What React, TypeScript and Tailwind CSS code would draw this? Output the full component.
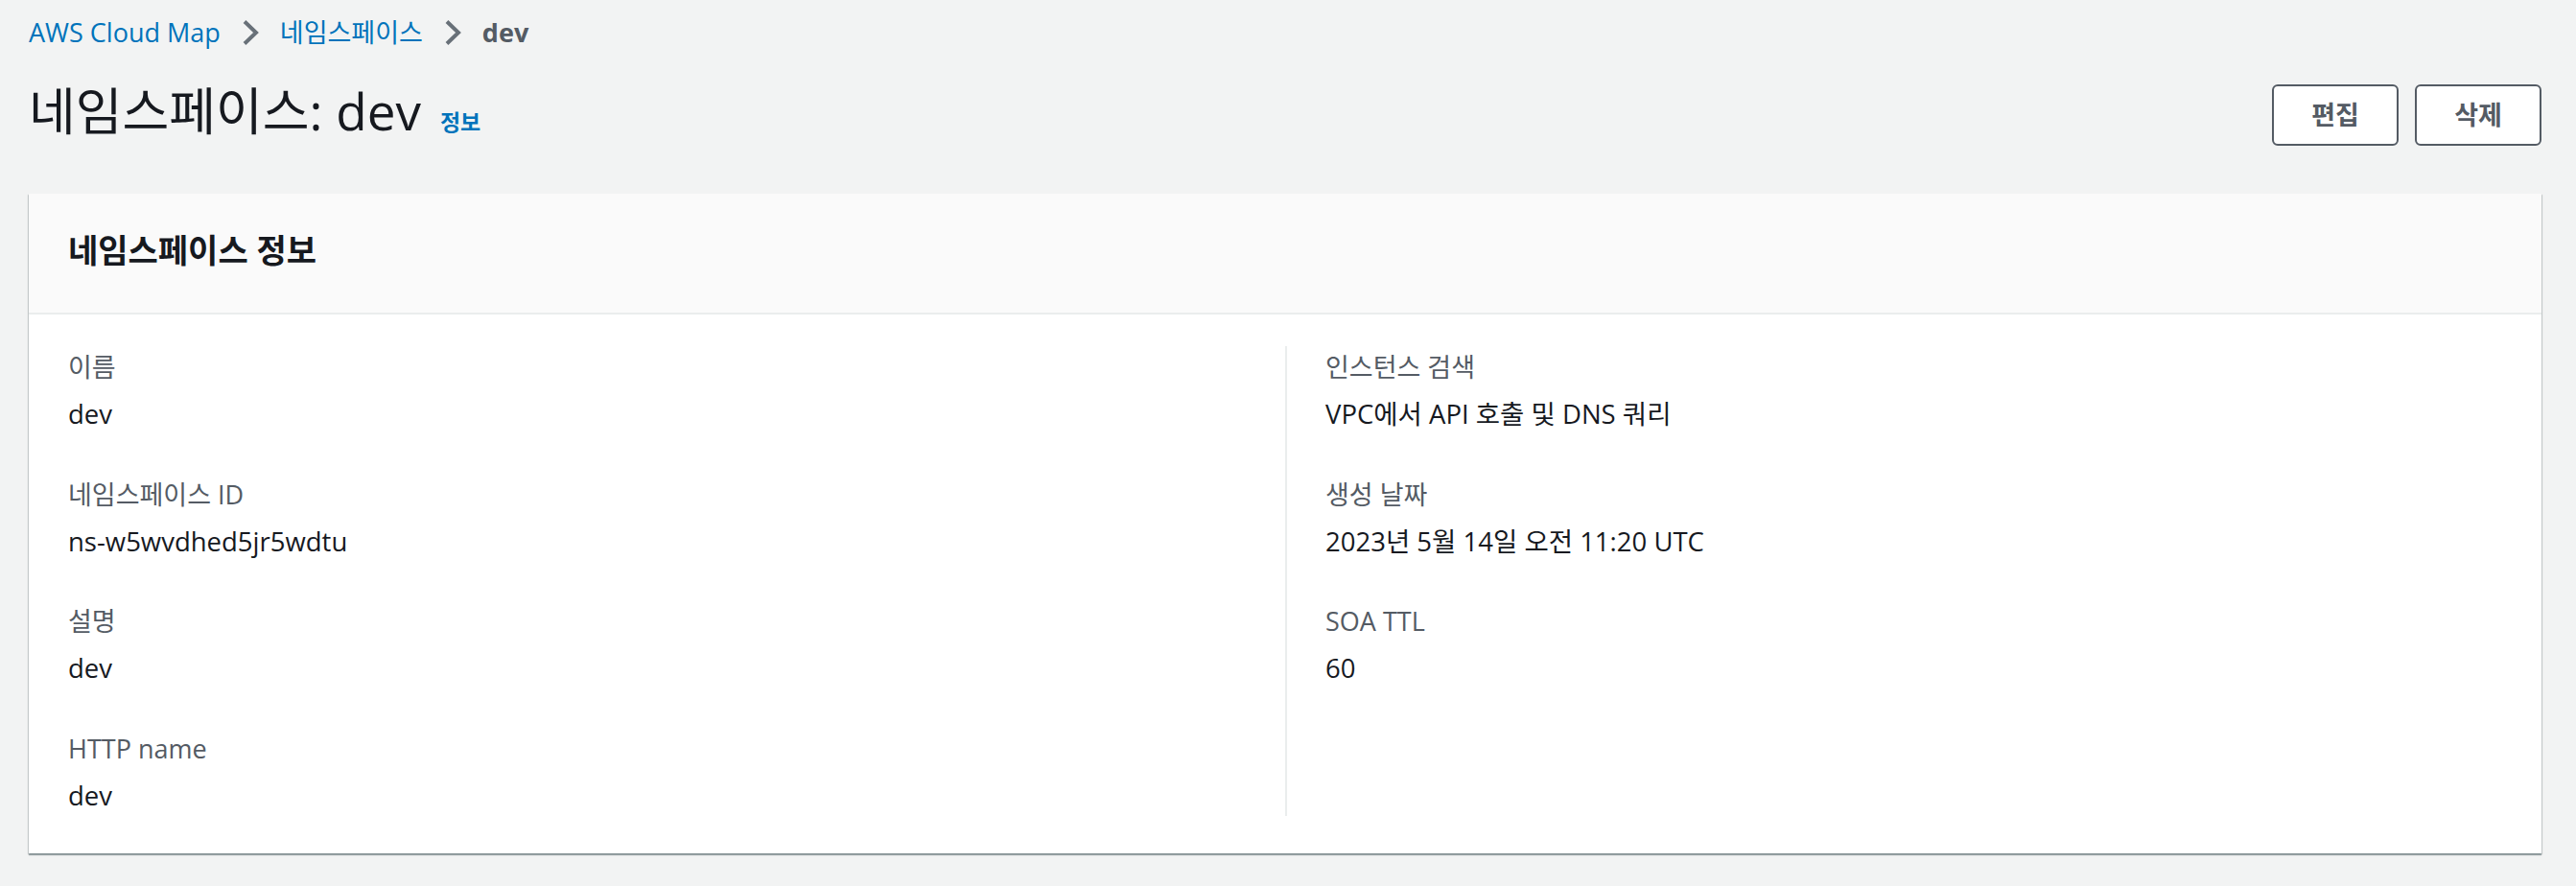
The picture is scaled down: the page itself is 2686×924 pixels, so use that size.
function Chevron() {
  return (
    <svg width="18" height="28" viewBox="0 0 18 28" className="mx-[22px] shrink-0">
      <polyline points="3,2.5 15,14 3,25.5" fill="none" stroke="#687078" strokeWidth="4" />
    </svg>
  );
}

interface Field {
  label: string;
  value: string;
}

const left: Field[] = [
  { label: "이름", value: "dev" },
  { label: "네임스페이스 ID", value: "ns-w5wvdhed5jr5wdtu" },
  { label: "설명", value: "dev" },
  { label: "HTTP name", value: "dev" },
];

const right: Field[] = [
  { label: "인스턴스 검색", value: "VPC에서 API 호출 및 DNS 쿼리" },
  { label: "생성 날짜", value: "2023년 5월 14일 오전 11:20 UTC" },
  { label: "SOA TTL", value: "60" },
];

function FieldList({ items }: { items: Field[] }) {
  return (
    <div className="flex flex-col gap-[40.5px]">
      {items.map((f) => (
        <div key={f.label}>
          <div className="mb-[6px] text-[27px] leading-[43px] text-[#545b64]">{f.label}</div>
          <div className="text-[27.5px] leading-[43px] text-[#16191f]">{f.value}</div>
        </div>
      ))}
    </div>
  );
}

export default function App() {
  return (
    <div className="min-h-screen bg-[#f2f3f3] pl-[30px] pr-[36px] pt-[12px] font-['Open_Sans','Noto_Sans_CJK_KR',sans-serif]">
      {/* breadcrumbs */}
      <nav className="flex h-[44px] items-center text-[27px] leading-[44px]">
        <a className="text-[#0073bb]">AWS Cloud Map</a>
        <Chevron />
        <a className="text-[#0073bb]">네임스페이스</a>
        <Chevron />
        <span className="font-bold text-[#545b64]">dev</span>
      </nav>

      {/* page header */}
      <div className="mt-[32px] flex h-[64px] items-center">
        <div className="flex items-baseline pb-[8px]">
          <h1 className="text-[53px] font-normal leading-[56px] text-[#16191f]">네임스페이스: dev</h1>
          <a className="ml-[20px] text-[23px] font-bold text-[#0073bb]">정보</a>
        </div>
        <div className="ml-auto flex gap-[17px]">
          <button className="h-[64px] w-[132px] rounded-[6px] border-2 border-[#545b64] bg-white text-[27px] font-bold text-[#545b64]">
            편집
          </button>
          <button className="h-[64px] w-[132px] rounded-[6px] border-2 border-[#545b64] bg-white text-[27px] font-bold text-[#545b64]">
            삭제
          </button>
        </div>
      </div>

      {/* container */}
      <section className="mt-[50px] bg-white shadow-[0_2px_1px_0_rgba(0,28,36,0.3),1px_1px_1px_0_rgba(0,28,36,0.15),-1px_1px_1px_0_rgba(0,28,36,0.15)]">
        <div className="border-b-2 border-[#eaeded] bg-[#fafafa] px-[41px] pb-[43px] pt-[37px]">
          <h2 className="text-[34px] font-bold leading-[44px] text-[#16191f]">네임스페이스 정보</h2>
        </div>
        <div className="grid grid-cols-2 px-[41px] pb-[39px] pt-[33px]">
          <FieldList items={left} />
          <div className="border-l-2 border-[#eaeded] pl-[40px]">
            <FieldList items={right} />
          </div>
        </div>
      </section>
    </div>
  );
}
